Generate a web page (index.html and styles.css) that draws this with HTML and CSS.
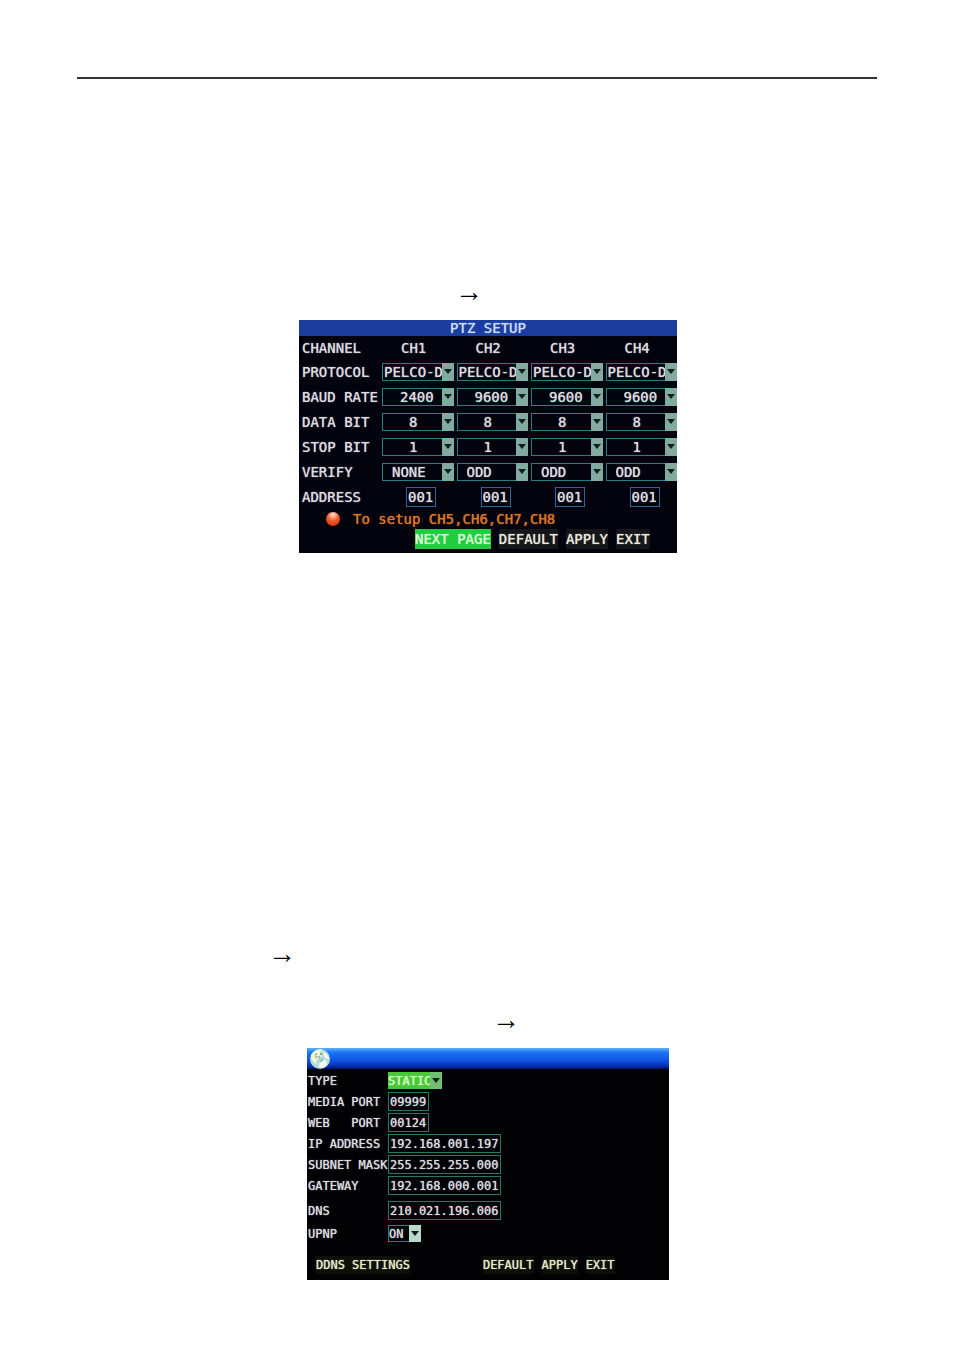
FILE: index.html
```
<!DOCTYPE html>
<html lang="en">
<head>
    <meta charset="UTF-8">
    <meta name="viewport" content="width=device-width, initial-scale=1.0">
    <title>PTZ Setup</title>
    <link rel="stylesheet" href="styles.css">
</head>
<body>
    <main class="page">
        <hr class="rule">

        <p class="step step-ptz">→</p>
        <form class="screen ptz">
            <h1 class="ptz-title">PTZ SETUP</h1>
            <table class="channels">
                <thead>
                    <tr><th scope="col">CHANNEL</th><th scope="col">CH1</th><th scope="col">CH2</th><th scope="col">CH3</th><th scope="col">CH4</th></tr>
                </thead>
                <tbody>
                    <tr class="protocol">
                        <th scope="row">PROTOCOL</th>
                        <td><span class="drop"><select aria-label="Protocol CH1"><option>PELCO-D</option></select></span></td>
                        <td><span class="drop"><select aria-label="Protocol CH2"><option>PELCO-D</option></select></span></td>
                        <td><span class="drop"><select aria-label="Protocol CH3"><option>PELCO-D</option></select></span></td>
                        <td><span class="drop"><select aria-label="Protocol CH4"><option>PELCO-D</option></select></span></td>
                    </tr>
                    <tr class="baud">
                        <th scope="row">BAUD RATE</th>
                        <td><span class="drop"><select aria-label="Baud rate CH1"><option>2400</option></select></span></td>
                        <td><span class="drop"><select aria-label="Baud rate CH2"><option>9600</option></select></span></td>
                        <td><span class="drop"><select aria-label="Baud rate CH3"><option>9600</option></select></span></td>
                        <td><span class="drop"><select aria-label="Baud rate CH4"><option>9600</option></select></span></td>
                    </tr>
                    <tr class="bit">
                        <th scope="row">DATA BIT</th>
                        <td><span class="drop"><select aria-label="Data bit CH1"><option>8</option></select></span></td>
                        <td><span class="drop"><select aria-label="Data bit CH2"><option>8</option></select></span></td>
                        <td><span class="drop"><select aria-label="Data bit CH3"><option>8</option></select></span></td>
                        <td><span class="drop"><select aria-label="Data bit CH4"><option>8</option></select></span></td>
                    </tr>
                    <tr class="bit">
                        <th scope="row">STOP BIT</th>
                        <td><span class="drop"><select aria-label="Stop bit CH1"><option>1</option></select></span></td>
                        <td><span class="drop"><select aria-label="Stop bit CH2"><option>1</option></select></span></td>
                        <td><span class="drop"><select aria-label="Stop bit CH3"><option>1</option></select></span></td>
                        <td><span class="drop"><select aria-label="Stop bit CH4"><option>1</option></select></span></td>
                    </tr>
                    <tr class="verify">
                        <th scope="row">VERIFY</th>
                        <td><span class="drop"><select aria-label="Verify CH1"><option>NONE</option></select></span></td>
                        <td><span class="drop"><select aria-label="Verify CH2"><option>ODD</option></select></span></td>
                        <td><span class="drop"><select aria-label="Verify CH3"><option>ODD</option></select></span></td>
                        <td><span class="drop"><select aria-label="Verify CH4"><option>ODD</option></select></span></td>
                    </tr>
                    <tr class="address">
                        <th scope="row">ADDRESS</th>
                        <td><input type="text" value="001" aria-label="Address CH1"></td>
                        <td><input type="text" value="001" aria-label="Address CH2"></td>
                        <td><input type="text" value="001" aria-label="Address CH3"></td>
                        <td><input type="text" value="001" aria-label="Address CH4"></td>
                    </tr>
                </tbody>
            </table>
            <p class="hint"><span class="ball"></span>To setup CH5,CH6,CH7,CH8</p>
            <div class="actions">
                <button type="button" class="current">NEXT PAGE</button>
                <button type="button">DEFAULT</button>
                <button type="button">APPLY</button>
                <button type="button">EXIT</button>
            </div>
        </form>

        <p class="step step-menu">→</p>
        <p class="step step-net">→</p>
        <form class="screen net">
            <header class="net-title">
                <svg width="22" height="22" viewBox="0 0 22 22" aria-hidden="true">
                    <circle cx="11" cy="11" r="10" fill="#b9dcd8"/>
                    <path d="M2 7Q6 1 13 1L11 5L13 8L8 11L7 16Q2 13 2 7Z" fill="#eef7da"/>
                    <path d="M14 4Q20 6 20 12L16 10ZM11 13L17 12L18 17Q14 21 10 19Z" fill="#f4faf4"/>
                    <path d="M6 7l2-1M9 8l2 2M14 11l-3 3" stroke="#7fb4ac" stroke-width="1.5"/>
                    <circle cx="7" cy="9" r="1" fill="#d89b3c"/>
                    <circle cx="12" cy="6" r="1" fill="#5aa04c"/>
                </svg>
            </header>
            <div class="fields">
                <div class="row">
                    <label for="type">TYPE</label>
                    <span class="drop type"><select id="type"><option>STATIC</option></select></span>
                </div>
                <div class="row">
                    <label for="media">MEDIA PORT</label>
                    <input type="text" id="media" class="port" value="09999">
                </div>
                <div class="row">
                    <label for="web">WEB&nbsp;&nbsp; PORT</label>
                    <input type="text" id="web" class="port" value="00124">
                </div>
                <div class="row">
                    <label for="ip">IP ADDRESS</label>
                    <input type="text" id="ip" class="ip" value="192.168.001.197">
                </div>
                <div class="row">
                    <label for="mask">SUBNET MASK</label>
                    <input type="text" id="mask" class="ip" value="255.255.255.000">
                </div>
                <div class="row">
                    <label for="gateway">GATEWAY</label>
                    <input type="text" id="gateway" class="ip" value="192.168.000.001">
                </div>
                <div class="row spaced">
                    <label for="dns">DNS</label>
                    <input type="text" id="dns" class="ip" value="210.021.196.006">
                </div>
                <div class="row upnp-row">
                    <label for="upnp">UPNP</label>
                    <span class="drop upnp"><select id="upnp"><option>ON</option></select></span>
                </div>
            </div>
            <div class="net-actions">
                <button type="button" class="ddns">DDNS SETTINGS</button>
                <button type="button">DEFAULT</button>
                <button type="button">APPLY</button>
                <button type="button">EXIT</button>
            </div>
        </form>
    </main>
</body>
</html>
```
FILE: styles.css
```
* {
    box-sizing: border-box;
}

body {
    margin: 0;
    background-color: #fff;
}

.page {
    padding: 77px 77px 72px;
}

.rule {
    margin: 0;
    border: 0;
    border-top: 2px solid #333;
}

/* menu path arrows */
.step {
    margin: 0;
    font-family: "Liberation Serif", serif;
    font-size: 28px;
    line-height: 24px;
    color: #000;
}

.step-ptz {
    margin-top: 201px;
    padding-left: 378px;
}

.step-menu {
    margin-top: 389px;
    padding-left: 191px;
}

.step-net {
    margin-top: 42px;
    padding-left: 415px;
}

/* recorder screens */
.screen {
    position: relative;
    left: 11px;
    margin: 16px auto 0;
    font-family: "DejaVu Sans Mono", monospace;
    color: #dcdce0;
    text-shadow: 0 0 1px currentColor;
}

.screen button,
.screen input,
.screen select {
    display: block;
    margin: 0;
    padding: 0;
    border: 0;
    border-radius: 0;
    background: none;
    color: inherit;
    font: inherit;
    text-shadow: inherit;
}

.screen input,
.screen select {
    border: 1px solid #267f86;
    appearance: none;
    outline: none;
}

.drop {
    position: relative;
    display: block;
}

.drop select {
    width: 100%;
    height: 100%;
}

.drop::before {
    content: "";
    position: absolute;
    top: 0;
    right: 0;
    width: 12px;
    height: 100%;
    background-color: #83aaa0;
    pointer-events: none;
}

.drop::after {
    content: "";
    position: absolute;
    top: 6px;
    right: 2px;
    border: 4px solid transparent;
    border-top: 5px solid #10201e;
    border-bottom: 0;
    pointer-events: none;
}

/* PTZ setup */
.ptz {
    max-width: 378px;
    padding-bottom: 4px;
    background-color: #02030c;
    font-size: 14px;
    line-height: 16px;
}

.ptz-title {
    margin: 0;
    background-color: #1c3da0;
    color: #c8dcf8;
    font-size: 14px;
    font-weight: normal;
    line-height: 16px;
    text-align: center;
}

.channels {
    width: 100%;
    height: 173px;
    border-collapse: collapse;
    table-layout: fixed;
}

.channels tr {
    height: 24px;
}

.channels th,
.channels td {
    padding: 0 0 0 3px;
    font-weight: normal;
    text-align: left;
}

.channels th:first-child {
    width: 80px;
}

.channels thead th:not(:first-child) {
    padding-left: 22px;
}

.channels .drop {
    height: 18px;
}

.protocol select {
    padding-left: 1px;
}

.screen .baud select {
    padding-left: 17px;
}

.screen .bit select {
    padding-left: 26px;
}

.screen .verify select {
    padding-left: 9px;
}

.screen .address input {
    width: 30px;
    height: 20px;
    margin-left: 24px;
    padding-left: 1px;
    border-color: #28699a;
}

.hint {
    display: flex;
    align-items: center;
    gap: 13px;
    height: 20px;
    margin: 0;
    padding-left: 27px;
    color: #e07820;
}

.ball {
    width: 14px;
    height: 14px;
    border-radius: 50%;
    background: radial-gradient(circle at 50% 20%, #ffe0d0 0, #f45a28 45%, #c82808 100%);
}

.actions {
    display: flex;
    gap: 8px;
    padding-left: 116px;
}

.screen .actions button {
    height: 20px;
    background-color: #15161a;
    color: #e8e8dc;
}

.screen .actions .current {
    background-color: #20cc40;
    color: #d8ffd0;
}

/* network */
.net {
    max-width: 362px;
    background-color: #020204;
    font-size: 12px;
    line-height: 14px;
}

.net-title {
    height: 22px;
    padding-left: 2px;
    background: linear-gradient(#5cb4f8 0, #1c74f4 20%, #0c50e0 60%, #0626a0 88%, #020204 100%);
}

.net-title svg {
    display: block;
}

.fields {
    padding-left: 1px;
}

.row {
    display: flex;
    align-items: center;
    height: 21px;
}

.spaced {
    margin-top: 4px;
}

.upnp-row {
    margin-top: 2px;
}

.row label {
    flex: 0 0 80px;
    white-space: nowrap;
}

.screen .row input {
    height: 19px;
    padding-left: 1px;
    border-color: #287868;
}

.screen .row .port {
    width: 41px;
}

.screen .row .ip {
    width: 113px;
}

.type,
.upnp {
    height: 17px;
}

.type {
    width: 54px;
}

.screen .type select {
    border: 0;
    background-color: #48c838;
    color: #d0ffc0;
}

.type::before {
    background-color: #70c070;
}

.upnp {
    width: 33px;
}

.upnp::before {
    background-color: #b8d8cc;
}

.net-actions {
    display: flex;
    gap: 8px;
    padding: 12px 0 6px 9px;
}

.screen .net-actions button {
    height: 18px;
    background-color: #0d1008;
    color: #e4e8c8;
}

.screen .net-actions .ddns {
    margin-right: 65px;
}
```
